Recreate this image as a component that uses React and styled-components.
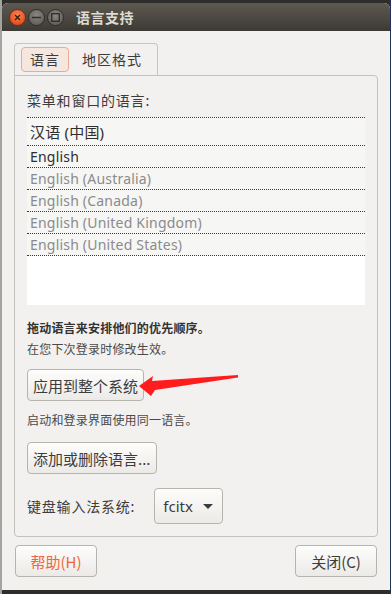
import React from 'react';
import styled, { createGlobalStyle } from 'styled-components';

// ============================================
// GLOBAL
// ============================================

const GlobalStyle = createGlobalStyle`
  html, body {
    margin: 0;
    padding: 0;
    width: 391px;
    height: 594px;
    overflow: hidden;
  }
  body {
    font-family: "Noto Sans", "Noto Sans CJK SC", sans-serif;
    color: #3c3c3c;
  }
`;

// ============================================
// STYLED COMPONENTS
// ============================================

const Desktop = styled.div`
  position: relative;
  width: 391px;
  height: 594px;
  box-sizing: border-box;
  padding: 3px 1px 4px 2px;
  background: linear-gradient(to right, #a5a39f 0 2px, #2f2d2a 2px calc(100% - 2px), #1d3550 calc(100% - 2px));
`;

const Window = styled.div`
  height: 100%;
  display: flex;
  flex-direction: column;
  background: #f2f1f0;
  border-radius: 6px 6px 0 0;
  overflow: hidden;
`;

const TitleBar = styled.div`
  height: 28px;
  flex: none;
  display: flex;
  align-items: center;
  padding-left: 7px;
  background: linear-gradient(to bottom, #5d5951, #3d3a35);
`;

const Controls = styled.div`
  display: flex;
  gap: 2px;
  margin-right: 12px;
`;

const WinButton = styled.div`
  width: 17px;
  height: 17px;
  border-radius: 50%;
  box-sizing: border-box;
  border: 1px solid ${props => props.close ? '#7a2b12' : '#2f2d29'};
  background: ${props => props.close
    ? 'radial-gradient(circle at 50% 35%, #f8855c, #e5521f 70%)'
    : 'radial-gradient(circle at 50% 35%, #8a8780, #66635d 70%)'};
  display: flex;
  align-items: center;
  justify-content: center;
`;

const Title = styled.div`
  font-family: "Noto Sans CJK SC", sans-serif;
  font-size: 14px;
  font-weight: 700;
  color: #dfdbd2;
  letter-spacing: 0.5px;
`;

const Body = styled.div`
  flex: 1;
  display: flex;
  flex-direction: column;
  padding: 12px 12px 13px 12px;
`;

const TabBar = styled.div`
  display: flex;
  align-items: center;
  width: 144px;
  height: 32px;
  box-sizing: border-box;
  border: 1px solid #c9c6c1;
  border-bottom: none;
  border-radius: 4px 4px 0 0;
  padding-left: 6px;
`;

const Tab = styled.div`
  font-family: "Noto Sans CJK SC", sans-serif;
  font-size: 14px;
  line-height: 23px;
  height: 25px;
  box-sizing: border-box;
  padding: 0 ${props => props.active ? '8px' : '12px'};
  border-radius: 4px;
  border: 1px solid ${props => props.active ? '#eeaa90' : 'transparent'};
  background: ${props => props.active ? '#f5e6df' : 'transparent'};
  color: #3c3c3c;
  letter-spacing: 1px;
`;

const Frame = styled.div`
  border: 1px solid #c4c1bc;
  border-radius: 0 4px 4px 4px;
  padding: 15px 11px 12px 12px;
  display: flex;
  flex-direction: column;
  align-items: flex-start;
`;

const Label = styled.div`
  font-family: "Noto Sans CJK SC", sans-serif;
  font-size: 14px;
  line-height: 18px;
  letter-spacing: 0.8px;
`;

const List = styled.div`
  margin-top: 8px;
  width: 338px;
  height: 188px;
  background: #ffffff;
  display: flex;
  flex-direction: column;
`;

const Row = styled.div`
  height: ${props => props.first ? '27px' : '21px'};
  flex: none;
  display: flex;
  align-items: center;
  padding-left: 3px;
  background: #f6f6f5;
  border-top: 1px dotted #3a3a3a;
  border-bottom: ${props => props.last ? '1px dotted #3a3a3a' : 'none'};
  font-size: ${props => props.first ? '15px' : '14px'};
  color: ${props => props.muted ? '#8b8b8b' : '#2e2e2e'};
  letter-spacing: 0.2px;
`;

const Hint = styled.div`
  margin-top: 12px;
  font-family: "Noto Sans CJK SC", sans-serif;
  font-size: 12px;
  line-height: 21px;
  letter-spacing: 0.2px;
`;

const HintLine = styled.div`
  font-weight: ${props => props.bold ? 700 : 400};
  color: ${props => props.bold ? '#333' : '#4a4a4a'};
`;

const Button = styled.div`
  margin-top: ${props => props.mt || 0}px;
  height: 32px;
  box-sizing: border-box;
  min-width: ${props => props.minWidth || 0}px;
  padding: 0 5px;
  display: flex;
  align-items: center;
  justify-content: center;
  border: 1px solid #b7b4ae;
  border-radius: 4px;
  background: linear-gradient(to bottom, #fdfdfc, #eceae7);
  box-shadow: 0 1px 0 rgba(255, 255, 255, 0.8) inset;
  font-family: "Noto Sans CJK SC", sans-serif;
  font-size: 15px;
  color: ${props => props.accent ? '#ee6640' : '#3c3c3c'};
`;

const Note = styled.div`
  margin-top: 9px;
  font-family: "Noto Sans CJK SC", sans-serif;
  font-size: 12px;
  line-height: 20px;
  letter-spacing: 0.2px;
  color: #4a4a4a;
`;

const InputRow = styled.div`
  margin-top: 14px;
  display: flex;
  align-items: center;
  gap: 19px;
`;

const Combo = styled.div`
  height: 36px;
  width: 69px;
  box-sizing: border-box;
  display: flex;
  align-items: center;
  padding-left: 8px;
  gap: 10px;
  border: 1px solid #b7b4ae;
  border-radius: 4px;
  background: linear-gradient(to bottom, #fdfdfc, #eceae7);
  font-size: 15px;
  color: #3c3c3c;
`;

const Caret = styled.div`
  width: 0;
  height: 0;
  border-left: 5px solid transparent;
  border-right: 5px solid transparent;
  border-top: 5px solid #3c3c3c;
`;

const Footer = styled.div`
  margin-top: 8px;
  display: flex;
  justify-content: space-between;
  padding: 0 1px;
`;

const Overlay = styled.svg`
  position: absolute;
  left: 0;
  top: 0;
  pointer-events: none;
`;

// ============================================
// REACT
// ============================================

const languages = [
  { name: '汉语 (中国)', muted: false },
  { name: 'English', muted: false },
  { name: 'English (Australia)', muted: true },
  { name: 'English (Canada)', muted: true },
  { name: 'English (United Kingdom)', muted: true },
  { name: 'English (United States)', muted: true }
];

export default function App() {
  return (
    <Desktop>
      <GlobalStyle />
      <Window>
        <TitleBar>
          <Controls>
            <WinButton close>
              <svg width="7" height="7" viewBox="0 0 7 7">
                <path d="M1 1L6 6M6 1L1 6" stroke="#3a1a0e" strokeWidth="1.3" />
              </svg>
            </WinButton>
            <WinButton>
              <svg width="9" height="3" viewBox="0 0 9 3">
                <path d="M0 1.5H9" stroke="#2f2d29" strokeWidth="1.4" />
              </svg>
            </WinButton>
            <WinButton>
              <svg width="9" height="9" viewBox="0 0 9 9">
                <rect x="0.7" y="0.7" width="7.6" height="7.6" fill="none" stroke="#2f2d29" strokeWidth="1.3" />
              </svg>
            </WinButton>
          </Controls>
          <Title>语言支持</Title>
        </TitleBar>

        <Body>
          <TabBar>
            <Tab active>语言</Tab>
            <Tab>地区格式</Tab>
          </TabBar>
          <Frame>
            <Label>菜单和窗口的语言:</Label>
            <List>
              {languages.map((lang, i) => (
                <Row key={lang.name} first={i === 0} last={i === languages.length - 1} muted={lang.muted}>
                  {lang.name}
                </Row>
              ))}
            </List>
            <Hint>
              <HintLine bold>拖动语言来安排他们的优先顺序。</HintLine>
              <HintLine>在您下次登录时修改生效。</HintLine>
            </Hint>
            <Button mt={10}>应用到整个系统</Button>
            <Note>启动和登录界面使用同一语言。</Note>
            <Button mt={12} minWidth={128}>添加或删除语言...</Button>
            <InputRow>
              <Label>键盘输入法系统:</Label>
              <Combo>
                fcitx
                <Caret />
              </Combo>
            </InputRow>
          </Frame>
          <Footer>
            <Button accent minWidth={82}>帮助(H)</Button>
            <Button minWidth={82}>关闭(C)</Button>
          </Footer>
        </Body>
      </Window>

      <Overlay width="391" height="594" viewBox="0 0 391 594">
        <polygon
          points="139,386 153,376 152,381 238,375 238,377.5 155,390 151,396"
          fill="#ff1c1c"
        />
      </Overlay>
    </Desktop>
  );
}
